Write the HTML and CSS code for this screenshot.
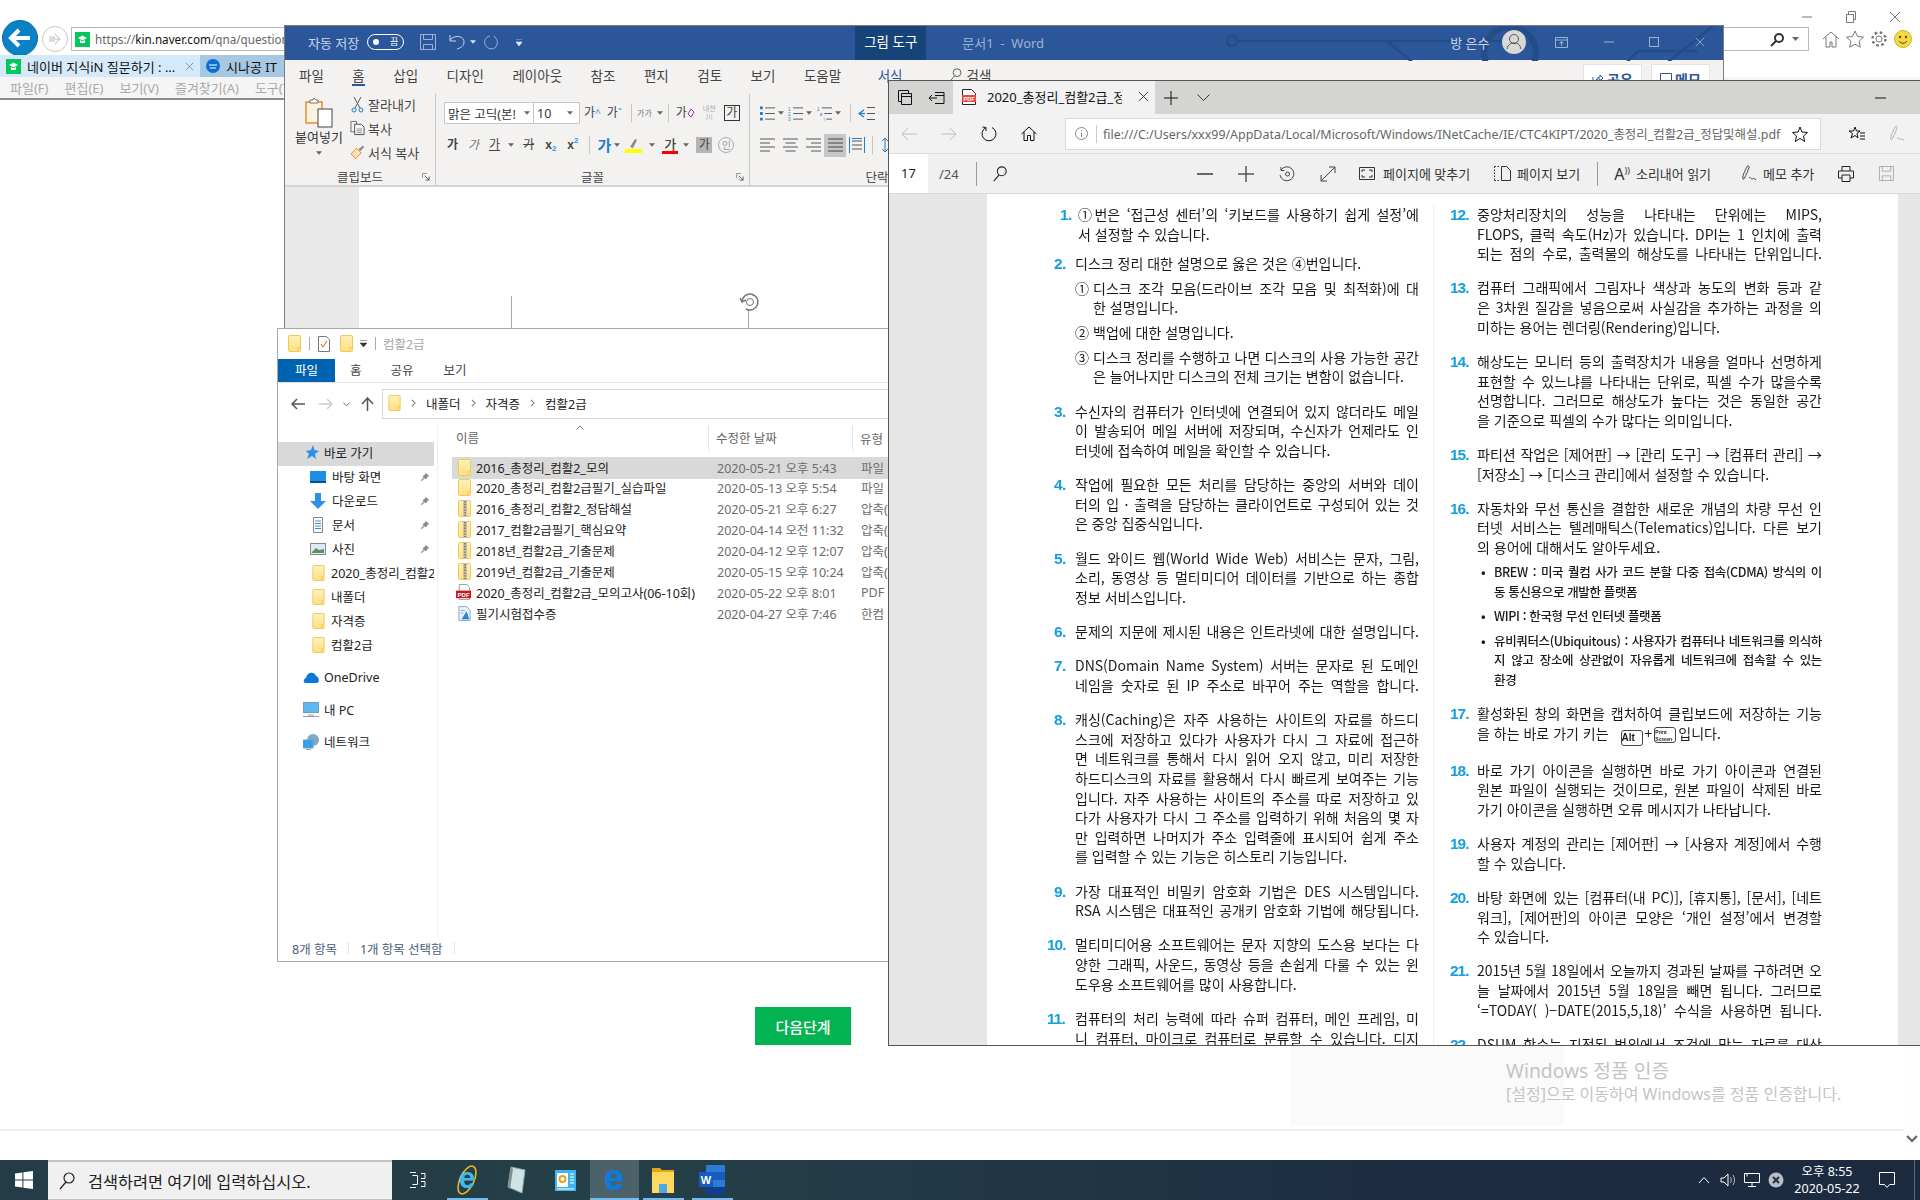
FILE: index.html
```html
<!DOCTYPE html>
<html lang="ko">
<head>
<meta charset="utf-8">
<title>2020_총정리_컴활2급_정답및해설</title>
<link rel="stylesheet" href="styles.css">
</head>
<body>
<svg class="defs" width="0" height="0" aria-hidden="true">
  <defs>
    <linearGradient id="fg" x1="0" y1="0" x2="0" y2="1"><stop offset="0" stop-color="#fff0b8"/><stop offset="1" stop-color="#ffdf85"/></linearGradient>
    <symbol id="folder" viewBox="0 0 13 17"><rect x=".5" y=".5" width="12" height="16" rx="1" fill="url(#fg)" stroke="#eecb55"/><path d="M10 16.5v-4h2.5" fill="none" stroke="#eecb55"/></symbol>
    <symbol id="zip" viewBox="0 0 13 17"><rect x=".5" y=".5" width="12" height="16" rx="1" fill="url(#fg)" stroke="#eecb55"/><rect x="5" y=".5" width="4" height="16" fill="#c9c3a8"/><path d="M7 1v15" stroke="#666" stroke-width="1.4" stroke-dasharray="1.4 1.4"/></symbol>
    <symbol id="pdfdoc" viewBox="0 0 17 18"><path d="M3.5.5h8l3 3v13h-11z" fill="#fff" stroke="#999"/><rect y="7" width="16" height="8" fill="#d0121b"/><text x="8" y="13.5" font-size="6.5" font-weight="700" fill="#fff" text-anchor="middle" font-family="Liberation Sans">PDF</text></symbol>
    <symbol id="hwp" viewBox="0 0 15 17"><path d="M1 .5h9l4 4v12H1z" fill="#e8f2fb" stroke="#7aa0c4"/><path d="M4 15l6-9 3 9z" fill="#2c86d2"/><path d="M3 5h5M3 8h3" stroke="#7aa0c4"/></symbol>
    <symbol id="pin" viewBox="0 0 12 12"><path d="M7 1l4 4-2 1-2 3-1.500-1.500L2 11l-1-1 3.500-3.500L3 5l3-2z" fill="#8a8a8a"/></symbol>
    <symbol id="nvfav" viewBox="0 0 15 15"><rect width="15" height="15" fill="#03c75a"/><path d="M3 6l4.500-2.500L12 6 7.500 8.500z" fill="#fff"/><path d="M5 8v3h5V8L7.500 9.500z" fill="#fff"/></symbol>
    <symbol id="x" viewBox="0 0 12 12"><path d="M1 1l10 10M11 1L1 11" fill="none" stroke="currentColor" stroke-width="1"/></symbol>
    <symbol id="caret" viewBox="0 0 7 4"><path d="M0 0h7L3.500 4z" fill="currentColor"/></symbol>
    <symbol id="bullets" viewBox="0 0 16 15"><path d="M0 0h3v3H0zM0 6h3v3H0zM0 12h3v3H0z" fill="#1f7fc7"/><path d="M5.500 1.500H16M5.500 7.500H16M5.500 13.500H16" stroke="#555"/></symbol>
    <symbol id="numbers" viewBox="0 0 16 15"><text x="0" y="4.500" font-size="5" fill="#1f7fc7" font-family="Liberation Sans">1</text><text x="0" y="10" font-size="5" fill="#1f7fc7" font-family="Liberation Sans">2</text><text x="0" y="15" font-size="5" fill="#1f7fc7" font-family="Liberation Sans">3</text><path d="M5.500 1.500H16M5.500 7.500H16M5.500 13.500H16" stroke="#555"/></symbol>
    <symbol id="multi" viewBox="0 0 16 15"><text x="0" y="4.500" font-size="5" fill="#1f7fc7" font-family="Liberation Sans">1</text><text x="3" y="10" font-size="5" fill="#1f7fc7" font-family="Liberation Sans">a</text><text x="7" y="15" font-size="5" fill="#1f7fc7" font-family="Liberation Sans">i</text><path d="M5 1.500h11M8 7.500h8M10 13.500h6" stroke="#555"/></symbol>
    <symbol id="indent" viewBox="0 0 17 15"><path d="M6 4L1 7.500 6 11" fill="none" stroke="#1f7fc7" stroke-width="1.300"/><path d="M1 7.500h6" stroke="#1f7fc7" stroke-width="1.300"/><path d="M9 1.500h8M9 7.500h8M9 13.500h8" stroke="#555"/></symbol>
    <symbol id="al" viewBox="0 0 15 14"><path d="M0 1h15M0 5h10M0 9h15M0 13h10" stroke="#555"/></symbol>
    <symbol id="ac" viewBox="0 0 15 14"><path d="M0 1h15M2.500 5h10M0 9h15M2.500 13h10" stroke="#555"/></symbol>
    <symbol id="ar" viewBox="0 0 15 14"><path d="M0 1h15M5 5h10M0 9h15M5 13h10" stroke="#555"/></symbol>
    <symbol id="aj" viewBox="0 0 15 14"><path d="M0 1h15M0 5h15M0 9h15M0 13h15" stroke="#444"/></symbol>
    <symbol id="ad" viewBox="0 0 16 16"><path d="M.500 0v16M15.500 0v16" stroke="#1f7fc7"/><path d="M3 4h10M3 8h10M3 12h10" stroke="#555"/><path d="M3 1.500h10" stroke="#1f7fc7"/></symbol>
    <symbol id="launch" viewBox="0 0 9 9"><path d="M.500 .500h5M.500 .500v5" stroke="#888" fill="none"/><path d="M3 3l5 5M8 4v4H4" stroke="#555" fill="none"/></symbol>
    <symbol id="searchglass" viewBox="0 0 16 18"><circle cx="10" cy="6" r="5" fill="none" stroke="currentColor" stroke-width="1.200"/><path d="M7 10L1 17" stroke="currentColor" stroke-width="1.200"/></symbol>
    <symbol id="chev" viewBox="0 0 6 10"><path d="M1 1l4 4-4 4" fill="none" stroke="#777" stroke-width="1.300"/></symbol>
    <symbol id="penc" viewBox="0 0 18 18"><path d="M7 1c-2 4-5 9-5 13 0 2 1 2 2 0 2-4 4-8 5-12 0-2-1-2-2-1zM9 14c2-2 2 2 4 1 1-1 2 0 4 1" fill="none" stroke="currentColor" stroke-width="1"/></symbol>
    <symbol id="floppy" viewBox="0 0 16 16"><path d="M.500 .500h15v15H.500zM3.500 .500v5h9v-5M3.500 15.500v-5h9v5" fill="none" stroke="currentColor"/></symbol>
    <symbol id="deskf" viewBox="0 0 16 12"><rect width="16" height="12" fill="#1b8fe8"/><rect x="0" y="10" width="16" height="2" fill="#0b4c91"/></symbol>
  </defs>
</svg>

<div class="desktop">
  <!-- background browser (Internet Explorer) -->
  <div class="ie-top">
    <svg class="ie-ctl-i" viewBox="0 0 12 12"><path d="M1 6h10" stroke="#777"/></svg>
    <svg class="ie-ctl-i" viewBox="0 0 12 12"><path d="M1.500 3.500h7v8h-7zM3.500 3.500v-3h7v8h-2" fill="none" stroke="#777"/></svg>
    <svg class="ie-ctl-i" viewBox="0 0 12 12"><use href="#x"/></svg>
  </div>
  <div class="ie-nav">
    <div class="ie-back"><svg width="24" height="24" viewBox="0 0 24 24"><path d="M11 4L3 12l8 8M3 12h19" fill="none" stroke="#fff" stroke-width="4"/></svg></div>
    <div class="ie-fwd"><svg width="16" height="16" viewBox="0 0 16 16"><path d="M8 3l5 5-5 5M13 8H2M2 6h6M2 10h6" fill="none" stroke="#bbb"/></svg></div>
    <div class="ie-addr">
      <svg class="fav" width="15" height="15"><use href="#nvfav"/></svg>
      <span class="ie-url">https://<b>kin.naver.com</b>/qna/question</span>
      <span class="ie-addr-right">
        <svg width="15" height="15" viewBox="0 0 15 15"><circle cx="9" cy="6" r="4" fill="none" stroke="#333" stroke-width="2"/><path d="M6 9l-5 5" stroke="#333" stroke-width="2"/></svg>
        <svg width="7" height="4" class="grey"><use href="#caret"/></svg>
      </span>
    </div>
    <div class="ie-tools">
      <svg width="18" height="18" viewBox="0 0 18 18"><path d="M1 9l8-7 8 7M4 7v10h4v-5h2v5h4V7" fill="none" stroke="#777"/></svg>
      <svg width="18" height="18" viewBox="0 0 18 18"><path d="M9 1l2.500 5.500 6 .7-4.400 4 1.200 6L9 14.200 3.700 17.200l1.200-6-4.400-4 6-.7z" fill="none" stroke="#777"/></svg>
      <svg width="18" height="18" viewBox="0 0 18 18"><circle cx="9" cy="9" r="3" fill="none" stroke="#777"/><circle cx="9" cy="9" r="6.500" fill="none" stroke="#777" stroke-width="2.400" stroke-dasharray="2.500 2.600"/></svg>
      <svg width="18" height="18" viewBox="0 0 18 18"><circle cx="9" cy="9" r="8.500" fill="#f5d93e" stroke="#d1b32b"/><circle cx="6" cy="7" r="1.200" fill="#444"/><circle cx="12" cy="7" r="1.200" fill="#444"/><path d="M5 11c2 3 6 3 8 0" fill="none" stroke="#444"/></svg>
    </div>
  </div>
  <div class="ie-tabs">
    <div class="ie-tab ie-tab-on"><svg width="15" height="15"><use href="#nvfav"/></svg><span class="ie-tab-t">네이버 지식iN 질문하기 : ...</span><svg class="ie-tab-x" width="9" height="9"><use href="#x"/></svg></div>
    <div class="ie-tab ie-tab-off"><svg width="14" height="14" viewBox="0 0 14 14"><circle cx="7" cy="7" r="7" fill="#0b6ed1"/><path d="M3 6h8M4 9h6" stroke="#fff"/></svg><span class="ie-tab-t">시나공 IT</span></div>
  </div>
  <div class="ie-menu"><span>파일(F)</span><span>편집(E)</span><span>보기(V)</span><span>즐겨찾기(A)</span><span>도구(T)</span></div>
  <div class="ie-body">
    <div class="ie-page">
      <main class="ie-main"><button class="next-btn" type="button">다음단계</button></main>
      <div class="ie-rule"></div>
    </div>
    <div class="ie-scroll"><svg width="12" height="8" viewBox="0 0 12 8"><path d="M1 1l5 5 5-5" fill="none" stroke="#606060" stroke-width="2"/></svg></div>
  </div>
  <div class="taskbar">
    <div class="tb-start"><svg width="18" height="18" viewBox="0 0 18 18"><path d="M0 2.500l7.400-1v7H0zM8.400 1.300L18 0v8.500H8.400zM0 9.500h7.400v7l-7.400-1zM8.400 9.500H18V18l-9.600-1.300z" fill="#fff"/></svg></div>
    <div class="tb-search"><svg width="16" height="18" class="ink"><use href="#searchglass"/></svg><span>검색하려면 여기에 입력하십시오.</span></div>
    <div class="tb-cell tb-view"><svg width="17" height="16" viewBox="0 0 17 16"><path d="M1 .5h6M1 15.500h6M3.500 3.500h5v9h-5M12 1.500h4v5h-4M12 9.500h4v5h-4" fill="none" stroke="#fff"/></svg></div>
    <div class="tb-cell tb-run"><svg width="26" height="30" viewBox="0 0 26 30"><ellipse cx="13" cy="15" rx="7" ry="15" transform="rotate(25 13 15)" fill="none" stroke="#e8b81e" stroke-width="1.600"/><text x="13" y="23" font-size="30" font-weight="700" fill="#3db9ee" text-anchor="middle" font-family="Liberation Sans">e</text></svg></div>
    <div class="tb-cell"><svg width="22" height="28" viewBox="0 0 22 28"><path d="M6 1l14 3-3 23-14-6z" fill="#cfe3e5" stroke="#8aa"/><path d="M6 1L3 21l2 2 3-20z" fill="#7d8d90"/></svg></div>
    <div class="tb-cell"><svg width="21" height="21" viewBox="0 0 21 21"><rect width="21" height="21" fill="#3fb4ee"/><rect x="2" y="3" width="11" height="14" fill="#fff"/><circle cx="7.500" cy="9" r="3" fill="none" stroke="#e5a21d" stroke-width="2"/><path d="M15 4h4M15 7h4M15 10h4M15 13h4" stroke="#fff"/><path d="M2 19h17" stroke="#fff"/></svg></div>
    <div class="tb-cell tb-active tb-run"><svg width="22" height="28" viewBox="0 0 22 28"><text x="11" y="24" font-size="36" font-weight="700" fill="#0a7ce0" text-anchor="middle" font-family="Liberation Sans">e</text></svg></div>
    <div class="tb-cell tb-run"><svg width="22" height="28" viewBox="0 0 22 28"><path d="M0 2h8l2 2h12v6H0z" fill="#e8a416"/><rect y="6" width="22" height="21" fill="#ffd95e"/><rect x="7" y="18" width="8" height="9" fill="#4da8e6"/></svg></div>
    <div class="tb-cell tb-run"><svg width="26" height="30" viewBox="0 0 26 30"><path d="M7 0h19v30H7z" fill="#2b7cd3"/><path d="M7 7h19v8H7z" fill="#185abd"/><path d="M7 22h19v8H7z" fill="#103f91"/><rect y="7" width="14" height="15" fill="#185abd"/><text x="7" y="19" font-size="11" font-weight="700" fill="#fff" text-anchor="middle" font-family="Liberation Sans">W</text></svg></div>
    <div class="tb-tray">
      <span class="tray-i"><svg width="12" height="8" viewBox="0 0 12 8"><path d="M1 7l5-5.500L11 7" fill="none" stroke="#fff"/></svg></span>
      <span class="tray-i"><svg width="16" height="16" viewBox="0 0 16 16"><path d="M1 6h3l4-4v12l-4-4H1z" fill="none" stroke="#fff"/><path d="M10.500 5c1 2 1 4 0 6M13 3c2 3 2 7 0 10" fill="none" stroke="#bbb"/></svg></span>
      <span class="tray-i"><svg width="16" height="16" viewBox="0 0 16 16"><path d="M.5 1.500h15v9H.5zM3 1.500v3M8 10.500v4M4 14.500h8" fill="none" stroke="#fff"/></svg></span>
      <span class="tray-i"><svg width="16" height="16" viewBox="0 0 16 16"><circle cx="8" cy="8" r="7.500" fill="#b8bfc4"/><path d="M5 5l6 6M11 5l-6 6" stroke="#243040" stroke-width="2"/></svg></span>
      <div class="tb-clock"><span>오후 8:55</span><span>2020-05-22</span></div>
      <span class="tb-note"><svg width="16" height="16" viewBox="0 0 16 16"><path d="M.5 .5h15v12h-5l-2.500 3-2.500-3H.5z" fill="none" stroke="#fff"/></svg></span>
      <span class="tb-desk"></span>
    </div>
  </div>

  <!-- Word window -->
  <section class="win word">
    <header class="w-title">
      <svg class="w-circuit" viewBox="0 0 500 35" width="500" height="35"><g fill="none" stroke="#244c86" stroke-width="2.500"><circle cx="9" cy="15" r="5"/><path d="M14 15h150l30 25M160 15h120"/><circle cx="287" cy="27" r="26" stroke-width="6"/><path d="M400 40l15-15h60M440 40l50-40"/></g></svg>
      <span class="w-auto">자동 저장</span>
      <span class="w-toggle"><i></i><em>끔</em></span>
      <svg class="w-save blue-ic" width="16" height="16"><use href="#floppy"/></svg>
      <svg class="w-undo" width="17" height="16" viewBox="0 0 17 16"><path d="M1 1v6h6M1 6c5-6 15-4 14 3-1 4-4 5-7 6" fill="none" stroke="#c9d5e8"/></svg>
      <svg class="w-ucaret" width="6" height="4"><use href="#caret"/></svg>
      <svg class="w-redo" width="16" height="16" viewBox="0 0 16 16"><path d="M7 2C2 3 0 8 3 12c3 4 9 4 11-1 1-3 0-6-3-9" fill="none" stroke="#9db3d3"/></svg>
      <svg class="w-cust" width="6" height="7" viewBox="0 0 6 7"><path d="M0 0h6M0 3h6L3 7z" fill="#e7edf6" stroke="#e7edf6" stroke-width=".6"/></svg>
      <span class="w-tool">그림 도구</span>
      <span class="w-doc">문서1&nbsp; -&nbsp; Word</span>
      <span class="w-user">방 은수</span>
      <span class="w-avatar"><svg width="24" height="24" viewBox="0 0 24 24"><circle cx="12" cy="12" r="12" fill="#d8d8d8"/><circle cx="12" cy="9" r="4.500" fill="none" stroke="#555"/><path d="M5 19c1-5 4-6 7-6s6 1 7 6" fill="none" stroke="#555"/></svg></span>
      <span class="w-ctl">
        <svg width="13" height="11" viewBox="0 0 13 11"><path d="M.5 .5h12v10H.5zM.5 3h12M6.500 9V5M4.500 6.500l2-2 2 2" fill="none" stroke="#9db3d3"/></svg>
        <svg width="10" height="10" viewBox="0 0 10 10"><path d="M0 5h10" stroke="#9db3d3"/></svg>
        <svg width="10" height="10" viewBox="0 0 10 10"><rect x=".5" y=".5" width="9" height="9" fill="none" stroke="#9db3d3"/></svg>
        <svg width="10" height="10" viewBox="0 0 12 12" class="blue-ic"><use href="#x"/></svg>
      </span>
    </header>
    <nav class="w-tabs">
      <span>파일</span><span class="on">홈</span><span>삽입</span><span>디자인</span><span>레이아웃</span><span>참조</span><span>편지</span><span>검토</span><span>보기</span><span>도움말</span>
      <span class="fmt">서식</span>
      <svg class="w-find" width="13" height="14"><use href="#searchglass"/></svg><span class="find">검색</span>
      <span class="w-btns"><span class="w-btn"><svg width="12" height="12" viewBox="0 0 12 12"><path d="M1 4v7h8V8M4 7c1-2 3-3 4-3V2l3 3-3 3V6c-2 0-3 0-4 1z" fill="none" stroke="#2b579a"/></svg>공유</span><span class="w-btn"><svg width="12" height="12" viewBox="0 0 12 12"><path d="M.5 .5h11v8H5l-2 3v-3H.5z" fill="none" stroke="#2b579a"/></svg>메모</span></span>
    </nav>
    <div class="w-ribbon">
      <div class="rg rg-clip">
        <div class="rg-main">
          <div class="paste">
            <svg width="28" height="31" viewBox="0 0 28 31"><path d="M1 5h16v21H1z" fill="#fbf3e0" stroke="#e0912c" stroke-width="1.500"/><path d="M5 5V3h3l1-2 2 2h2v3H5z" fill="#fff" stroke="#777"/><rect x="13" y="12" width="14" height="18" fill="#fff" stroke="#444"/></svg>
            <span>붙여넣기</span>
            <svg class="grey" width="6" height="4"><use href="#caret"/></svg>
          </div>
          <div class="clip-list">
            <div><svg width="13" height="17" viewBox="0 0 13 17"><path d="M3 1l6 11M10 1L4 12" stroke="#555" fill="none"/><circle cx="3" cy="14" r="2" fill="none" stroke="#1f7fc7"/><circle cx="10" cy="14" r="2" fill="none" stroke="#1f7fc7"/></svg>잘라내기</div>
            <div><svg width="16" height="16" viewBox="0 0 16 16"><path d="M1 1h6v11H1z" fill="none" stroke="#666"/><path d="M5 4h7l3 3v8H5z" fill="#fff" stroke="#444"/><path d="M7 9h6M7 11h6M7 13h6" stroke="#888"/></svg>복사</div>
            <div><svg width="16" height="16" viewBox="0 0 16 16"><path d="M1 10l6-6 5 5-6 6z" fill="#fbe3b5" stroke="#e0812c"/><path d="M9 5l5-4 1 2-4 4" fill="#888"/></svg>서식 복사</div>
          </div>
        </div>
        <div class="rg-label">클립보드<svg class="launch" width="8" height="8"><use href="#launch"/></svg></div>
      </div>
      <div class="rg rg-font">
        <div class="rg-main col">
          <div class="frow">
            <span class="fbox fname">맑은 고딕(본!<svg class="grey" width="6" height="4"><use href="#caret"/></svg></span>
            <span class="fbox fsize">10<svg class="grey" width="6" height="4"><use href="#caret"/></svg></span>
            <span class="gg ml4">가<sup class="sb">^</sup></span><span class="gg ml6">가<sup class="sb">ˇ</sup></span>
            <span class="vsep ml9"></span>
            <span class="gg small ml5">가가</span><svg class="grey ml5" width="6" height="4"><use href="#caret"/></svg>
            <span class="vsep ml5"></span>
            <span class="gg ml7">가<svg width="8" height="10" viewBox="0 0 8 10"><path d="M4 1l3 3-3 5-3-3z" fill="none" stroke="#a32cb5"/></svg></span>
            <span class="gruby ml7">내천<br>川</span>
            <span class="gg boxed ml7">가</span>
          </div>
          <div class="frow r2">
            <span class="gg b ml11">가</span><span class="gg i ml10">가</span><span class="gg u ml10">가</span><svg class="grey ml8" width="6" height="4"><use href="#caret"/></svg>
            <span class="gg s ml9">가</span><span class="gg sm ml11">x<sub>2</sub></span><span class="gg sm ml11">x<sup>2</sup></span>
            <span class="vsep ml11"></span>
            <span class="gg texteff ml7">가</span><svg class="grey ml3" width="6" height="4"><use href="#caret"/></svg>
            <svg class="ml5" width="17" height="16" viewBox="0 0 17 16"><path d="M5 10l5-8 2 1-4 8z" fill="#888"/><rect y="12" width="17" height="4" fill="#ff0"/></svg>
            <svg class="grey ml7" width="6" height="4"><use href="#caret"/></svg>
            <span class="gg red ml7">가</span><svg class="grey ml5" width="6" height="4"><use href="#caret"/></svg>
            <span class="gg shade ml7">가</span>
            <span class="gg circled ml6">인</span>
          </div>
        </div>
        <div class="rg-label">글꼴<svg class="launch" width="8" height="8"><use href="#launch"/></svg></div>
      </div>
      <div class="rg rg-para">
        <div class="rg-main col">
          <div class="frow prow">
            <svg width="15" height="15"><use href="#bullets"/></svg><svg class="grey ml3" width="6" height="4"><use href="#caret"/></svg>
            <svg class="ml4" width="15" height="15"><use href="#numbers"/></svg><svg class="grey ml3" width="6" height="4"><use href="#caret"/></svg>
            <svg class="ml5" width="15" height="15"><use href="#multi"/></svg><svg class="grey ml3" width="6" height="4"><use href="#caret"/></svg>
            <span class="vsep ml9"></span>
            <svg class="ml7" width="17" height="15"><use href="#indent"/></svg>
          </div>
          <div class="frow r2 prow">
            <svg width="15" height="14"><use href="#al"/></svg>
            <svg class="ml8" width="15" height="14"><use href="#ac"/></svg>
            <svg class="ml8" width="15" height="14"><use href="#ar"/></svg>
            <span class="a-on"><svg width="15" height="14"><use href="#aj"/></svg></span>
            <svg class="ml3" width="16" height="16"><use href="#ad"/></svg>
            <span class="vsep ml7"></span>
            <svg class="ml8" width="8" height="16" viewBox="0 0 8 16"><path d="M4 1v14M1 4l3-3 3 3M1 12l3 3 3-3" fill="none" stroke="#1f7fc7"/></svg>
          </div>
        </div>
        <div class="rg-label lab-para">단락</div>
      </div>
    </div>
    <div class="w-doc-area">
      <div class="w-gutter"></div>
      <div class="w-sheet">
        <span class="handle-l"></span>
        <span class="handle-r"></span>
        <svg class="rot" width="26" height="26" viewBox="0 0 26 26"><path d="M5 13a8 8 0 1 1 4 7M3 9l2 4 4-2" fill="none" stroke="#777" stroke-width="1.500"/><circle cx="13" cy="13" r="3.500" fill="none" stroke="#777"/></svg>
      </div>
    </div>
  </section>

  <!-- File Explorer -->
  <section class="win explorer">
    <div class="ex-qat">
      <svg width="13" height="17"><use href="#folder"/></svg><span class="q-sep"></span>
      <svg class="ml8" width="12" height="16" viewBox="0 0 12 16"><path d="M.5 .5h8l3 3v12H.5z" fill="#fff" stroke="#777"/><path d="M3 8l2 3 4-6" fill="none" stroke="#e2562d"/></svg>
      <svg class="ml10" width="13" height="17"><use href="#folder"/></svg>
      <svg class="ml7" width="7" height="7" viewBox="0 0 7 7"><path d="M0 .5h7M0 3h7L3.500 7z" fill="#333" stroke="#333" stroke-width=".5"/></svg>
      <span class="q-sep ml5"></span>
      <span class="ex-title">컴활2급</span>
    </div>
    <nav class="ex-tabs"><span class="ex-file">파일</span><span class="ex-t1">홈</span><span class="ex-t2">공유</span><span class="ex-t3">보기</span></nav>
    <div class="ex-nav">
      <svg width="14" height="12" viewBox="0 0 14 12"><path d="M6 1L1 6l5 5M1 6h13" fill="none" stroke="#555" stroke-width="1.500"/></svg>
      <svg class="ml14" width="14" height="12" viewBox="0 0 14 12"><path d="M8 1l5 5-5 5M13 6H0" fill="none" stroke="#ccc" stroke-width="1.500"/></svg>
      <svg class="ml10" width="7" height="5" viewBox="0 0 7 5"><path d="M.5 .5L3.500 4 6.500 .5" fill="none" stroke="#777"/></svg>
      <svg class="ml11" width="13" height="14" viewBox="0 0 13 14"><path d="M1 7l5.500-6L12 7M6.500 1v13" fill="none" stroke="#555" stroke-width="1.500"/></svg>
      <div class="ex-addr">
        <svg width="13" height="16"><use href="#folder"/></svg>
        <svg class="crumb-ch" width="5" height="8"><use href="#chev"/></svg><span>내폴더</span>
        <svg class="crumb-ch" width="5" height="8"><use href="#chev"/></svg><span>자격증</span>
        <svg class="crumb-ch" width="5" height="8"><use href="#chev"/></svg><span>컴활2급</span>
      </div>
    </div>
    <div class="ex-body">
      <aside class="ex-side">
        <div class="sd sd-root sd-on"><svg width="14" height="15" viewBox="0 0 14 15"><path d="M8 0l1.500 5L14 6l-4 3 1 5-4-3-5 3 2-5-3-3 5-1z" fill="#2f8fe8"/></svg>바로 가기</div>
        <div class="sd"><svg width="16" height="12"><use href="#deskf"/></svg><span class="sd-t">바탕 화면</span><svg class="sd-pin" width="10" height="10"><use href="#pin"/></svg></div>
        <div class="sd"><svg width="16" height="16" viewBox="0 0 16 16"><path d="M5 0h6v8h5l-8 8-8-8h5z" fill="#2f8fe8"/></svg><span class="sd-t">다운로드</span><svg class="sd-pin" width="10" height="10"><use href="#pin"/></svg></div>
        <div class="sd"><svg width="16" height="16" viewBox="0 0 16 16"><path d="M3.500 .5h9v15h-9z" fill="#fff" stroke="#888"/><path d="M5 4h6M5 6.500h6M5 9h6M5 11.500h6" stroke="#3b8ed0"/></svg><span class="sd-t">문서</span><svg class="sd-pin" width="10" height="10"><use href="#pin"/></svg></div>
        <div class="sd"><svg width="16" height="12" viewBox="0 0 16 12"><rect x=".5" y=".5" width="15" height="11" fill="#dcebf5" stroke="#888"/><path d="M2 9l4-4 3 2 5-1v4H2z" fill="#5c8f6a"/></svg><span class="sd-t">사진</span><svg class="sd-pin" width="10" height="10"><use href="#pin"/></svg></div>
        <div class="sd sd-f"><svg width="13" height="16"><use href="#folder"/></svg><span class="sd-t clip">2020_총정리_컴활2급</span></div>
        <div class="sd sd-f"><svg width="13" height="16"><use href="#folder"/></svg><span class="sd-t">내폴더</span></div>
        <div class="sd sd-f"><svg width="13" height="16"><use href="#folder"/></svg><span class="sd-t">자격증</span></div>
        <div class="sd sd-f"><svg width="13" height="16"><use href="#folder"/></svg><span class="sd-t">컴활2급</span></div>
        <div class="sd sd-root sd-od"><svg width="16" height="11" viewBox="0 0 16 11"><path d="M3 11C0 11 0 7 3 6c1-6 8-7 10-2 3 0 4 7 1 7z" fill="#0a78d6"/></svg>OneDrive</div>
        <div class="sd sd-root sd-pc"><svg width="16" height="15" viewBox="0 0 16 15"><rect x=".5" y=".5" width="15" height="10" fill="#5ab9f5" stroke="#7a9bb5"/><path d="M5 13h6M0 14.500h16" stroke="#99a"/></svg>내 PC</div>
        <div class="sd sd-root sd-nw"><svg width="16" height="16" viewBox="0 0 16 16"><circle cx="10" cy="6" r="6" fill="#7fa9c9"/><rect y="6" width="10" height="8" fill="#2da2ee" stroke="#7a9bb5"/><path d="M3 15.500h5" stroke="#99a"/></svg>네트워크</div>
      </aside>
      <div class="ex-list">
        <div class="ex-head"><span class="hc hc-n">이름<svg class="sort" width="8" height="5" viewBox="0 0 8 5"><path d="M.5 4.500L4 1l3.500 3.500" fill="none" stroke="#777"/></svg></span><span class="hc hc-d">수정한 날짜</span><span class="hc-t">유형</span></div>
        <div class="fr fr-on"><svg width="13" height="17"><use href="#folder"/></svg><span class="fn">2016_총정리_컴활2_모의</span><span class="fd">2020-05-21 오후 5:43</span><span class="ft">파일</span></div>
        <div class="fr"><svg width="13" height="17"><use href="#folder"/></svg><span class="fn">2020_총정리_컴활2급필기_실습파일</span><span class="fd">2020-05-13 오후 5:54</span><span class="ft">파일</span></div>
        <div class="fr"><svg width="13" height="17"><use href="#zip"/></svg><span class="fn">2016_총정리_컴활2_정답해설</span><span class="fd">2020-05-21 오후 6:27</span><span class="ft">압축(</span></div>
        <div class="fr"><svg width="13" height="17"><use href="#zip"/></svg><span class="fn">2017_컴활2급필기_핵심요약</span><span class="fd">2020-04-14 오전 11:32</span><span class="ft">압축(</span></div>
        <div class="fr"><svg width="13" height="17"><use href="#zip"/></svg><span class="fn">2018년_컴활2급_기출문제</span><span class="fd">2020-04-12 오후 12:07</span><span class="ft">압축(</span></div>
        <div class="fr"><svg width="13" height="17"><use href="#zip"/></svg><span class="fn">2019년_컴활2급_기출문제</span><span class="fd">2020-05-15 오후 10:24</span><span class="ft">압축(</span></div>
        <div class="fr"><svg class="pdfic" width="16" height="17"><use href="#pdfdoc"/></svg><span class="fn">2020_총정리_컴활2급_모의고사(06-10회)</span><span class="fd">2020-05-22 오후 8:01</span><span class="ft">PDF</span></div>
        <div class="fr"><svg width="14" height="17"><use href="#hwp"/></svg><span class="fn">필기시험접수증</span><span class="fd">2020-04-27 오후 7:46</span><span class="ft">한컴</span></div>
      </div>
    </div>
    <footer class="ex-status"><span>8개 항목</span><span class="st-sep"></span><span>1개 항목 선택함</span><span class="st-sep"></span></footer>
  </section>

  <!-- Edge window -->
  <section class="win edge">
    <div class="e-tabs">
      <svg class="e-t1" width="14" height="15" viewBox="0 0 14 15"><path d="M3.500 3.500h10v11h-10z" fill="#d4d4d2" stroke="#111"/><path d="M.5 .5h10v3M.5 .5v11h3M3.500 6.500h10" fill="none" stroke="#111"/></svg>
      <svg class="e-t2" width="16" height="12" viewBox="0 0 16 12"><path d="M6 .5h9v11H6M6 3.500h9M0 6h8M3 3L0 6l3 3" fill="none" stroke="#111"/></svg>
      <div class="e-tab">
        <svg width="14" height="16" viewBox="0 0 14 16"><path d="M.5 .5h9l4 4v11H.5z" fill="#fff" stroke="#222"/><rect x="0" y="6" width="14" height="7" fill="#f0453a"/><text x="7" y="11.500" font-size="5.500" font-weight="700" fill="#fff" text-anchor="middle" font-family="Liberation Sans">PDF</text></svg>
        <span class="e-tab-t">2020_총정리_컴활2급_정답및해설.pdf</span>
        <svg class="e-tab-x" width="11" height="11"><use href="#x"/></svg>
      </div>
      <svg class="e-plus" width="14" height="14" viewBox="0 0 14 14"><path d="M7 0v14M0 7h14" stroke="#111"/></svg>
      <svg class="e-more" width="13" height="7" viewBox="0 0 13 7"><path d="M.5 .5l6 6 6-6" fill="none" stroke="#333"/></svg>
      <svg class="e-min" width="11" height="2"><path d="M0 1h11" stroke="#111"/></svg>
    </div>
    <div class="e-nav">
      <svg width="16" height="14" viewBox="0 0 16 14" class="e-back"><path d="M7 1L1 7l6 6M1 7h15" fill="none" stroke="#bdbdbd"/></svg>
      <svg width="16" height="14" viewBox="0 0 16 14" class="e-fwd"><path d="M9 1l6 6-6 6M15 7H0" fill="none" stroke="#bdbdbd"/></svg>
      <svg width="16" height="16" viewBox="0 0 16 16" class="e-ref"><path d="M5 1.500a7 7 0 1 0 6 0M5 1.500V5M5 1.500L1.500 1" fill="none" stroke="#111"/></svg>
      <svg width="16" height="15" viewBox="0 0 16 15" class="e-home"><path d="M.5 8L8 1l7.500 7M3 6v8.500h3.500v-5h3v5H13V6" fill="none" stroke="#111"/></svg>
      <div class="e-addr">
        <svg width="13" height="13" viewBox="0 0 13 13"><circle cx="6.500" cy="6.500" r="6" fill="none" stroke="#888"/><path d="M6.500 5.500v4.500M6.500 3v1.200" stroke="#888"/></svg>
        <span class="e-addr-sep"></span>
        <span class="e-url">file:///C:/Users/xxx99/AppData/Local/Microsoft/Windows/INetCache/IE/CTC4KIPT/2020_총정리_컴활2급_정답및해설.pdf</span>
        <svg class="e-star" width="16" height="16" viewBox="0 0 16 16"><path d="M8 1l2 5 5.500.5-4 3.500 1.200 5.500L8 12.500 3.300 15.500l1.200-5.500-4-3.500L6 6z" fill="none" stroke="#111"/></svg>
      </div>
      <svg width="16" height="15" viewBox="0 0 16 15" class="e-hub"><path d="M6 1L7.500 5 11 5 8 7.500 9 12 6 9.500 2 12 3.500 7.500 0 5l4.500 0z" fill="none" stroke="#111"/><path d="M11 7h5M11 10h5M11 13h5" stroke="#111"/></svg>
      <svg width="16" height="18" class="e-pen"><use href="#penc"/></svg>
    </div>
    <div class="e-pdfbar">
      <span class="e-page">17</span>
      <span class="e-total">/24</span>
      <span class="e-sep"></span>
      <svg class="e-find ink" width="16" height="16" viewBox="0 0 16 18"><use href="#searchglass"/></svg>
      <svg class="e-minus" width="16" height="2"><path d="M0 1h16" stroke="#666" stroke-width="2"/></svg>
      <svg class="e-zoomin" width="16" height="16" viewBox="0 0 16 16"><path d="M8 0v16M0 8h16" stroke="#555" stroke-width="1.500"/></svg>
      <svg class="e-rot" width="16" height="16" viewBox="0 0 16 16"><path d="M2 4a7 7 0 1 1-1 5M2 1v3.500h3.500" fill="none" stroke="#444"/><circle cx="8.500" cy="8" r="2" fill="none" stroke="#444"/></svg>
      <svg class="e-full" width="16" height="16" viewBox="0 0 16 16"><path d="M1 15L15 1M9 1h6v6M1 9v6h6" fill="none" stroke="#444"/></svg>
      <span class="e-act e-a1"><svg width="16" height="13" viewBox="0 0 16 13"><path d="M.5 .5h15v12H.5z" fill="none" stroke="#333"/><path d="M3 5V3h3M13 5V3h-3M3 8v2h3M13 8v2h-3" fill="none" stroke="#333"/></svg>페이지에 맞추기</span>
      <span class="e-act e-a2"><svg width="17" height="15" viewBox="0 0 17 15"><path d="M.5 .5h5M.5 14.500h5M.5 .5v14" fill="none" stroke="#333" stroke-dasharray="1.500 1.500"/><path d="M7.500 .5h5l4 4v10h-9z" fill="none" stroke="#333"/></svg>페이지 보기</span>
      <span class="e-sep e-sep2"></span>
      <span class="e-act e-a3"><span class="e-reada">A<sup>))</sup></span>소리내어 읽기</span>
      <span class="e-act e-a4"><svg width="16" height="17"><use href="#penc"/></svg>메모 추가</span>
      <svg class="e-print" width="16" height="16" viewBox="0 0 16 16"><path d="M4 5V.5h8V5M.5 5h15v7H12M4 12H.5V5M4 9h8v6.500H4z" fill="none" stroke="#222"/></svg>
      <svg class="e-psave" width="15" height="15"><use href="#floppy"/></svg>
    </div>
    <div class="pdf-view">
      <div class="pdf-page">
        <div class="pdf-col pdf-left">
          <div class="p p-first"><b class="n">1.</b><div class="t"><div class="l">①번은 ‘접근성 센터’의 ‘키보드를 사용하기 쉽게 설정’에</div><div class="l e">서 설정할 수 있습니다.</div></div></div>
          <div class="p p-tight"><b class="n">2.</b><div class="t"><div class="l e">디스크 정리 대한 설명으로 옳은 것은 ④번입니다.</div>
            <div class="sub"><span class="m">①</span><div class="t"><div class="l">디스크 조각 모음(드라이브 조각 모음 및 최적화)에 대</div><div class="l e">한 설명입니다.</div></div></div>
            <div class="sub"><span class="m">②</span><div class="t"><div class="l e">백업에 대한 설명입니다.</div></div></div>
            <div class="sub"><span class="m">③</span><div class="t"><div class="l">디스크 정리를 수행하고 나면 디스크의 사용 가능한 공간</div><div class="l e">은 늘어나지만 디스크의 전체 크기는 변함이 없습니다.</div></div></div>
          </div></div>
          <div class="p"><b class="n">3.</b><div class="t"><div class="l">수신자의 컴퓨터가 인터넷에 연결되어 있지 않더라도 메일</div><div class="l">이 발송되어 메일 서버에 저장되며, 수신자가 언제라도 인</div><div class="l e">터넷에 접속하여 메일을 확인할 수 있습니다.</div></div></div>
          <div class="p"><b class="n">4.</b><div class="t"><div class="l">작업에 필요한 모든 처리를 담당하는 중앙의 서버와 데이</div><div class="l">터의 입 · 출력을 담당하는 클라이언트로 구성되어 있는 것</div><div class="l e">은 중앙 집중식입니다.</div></div></div>
          <div class="p"><b class="n">5.</b><div class="t"><div class="l">월드 와이드 웹(World Wide Web) 서비스는 문자, 그림,</div><div class="l">소리, 동영상 등 멀티미디어 데이터를 기반으로 하는 종합</div><div class="l e">정보 서비스입니다.</div></div></div>
          <div class="p"><b class="n">6.</b><div class="t"><div class="l">문제의 지문에 제시된 내용은 인트라넷에 대한 설명입니다.</div></div></div>
          <div class="p"><b class="n">7.</b><div class="t"><div class="l">DNS(Domain Name System) 서버는 문자로 된 도메인</div><div class="l">네임을 숫자로 된 IP 주소로 바꾸어 주는 역할을 합니다.</div></div></div>
          <div class="p"><b class="n">8.</b><div class="t"><div class="l">캐싱(Caching)은 자주 사용하는 사이트의 자료를 하드디</div><div class="l">스크에 저장하고 있다가 사용자가 다시 그 자료에 접근하</div><div class="l">면 네트워크를 통해서 다시 읽어 오지 않고, 미리 저장한</div><div class="l">하드디스크의 자료를 활용해서 다시 빠르게 보여주는 기능</div><div class="l">입니다. 자주 사용하는 사이트의 주소를 따로 저장하고 있</div><div class="l">다가 사용자가 다시 그 주소를 입력하기 위해 처음의 몇 자</div><div class="l">만 입력하면 나머지가 주소 입력줄에 표시되어 쉽게 주소</div><div class="l e">를 입력할 수 있는 기능은 히스토리 기능입니다.</div></div></div>
          <div class="p"><b class="n">9.</b><div class="t"><div class="l">가장 대표적인 비밀키 암호화 기법은 DES 시스템입니다.</div><div class="l">RSA 시스템은 대표적인 공개키 암호화 기법에 해당됩니다.</div></div></div>
          <div class="p"><b class="n n2">10.</b><div class="t"><div class="l">멀티미디어용 소프트웨어는 문자 지향의 도스용 보다는 다</div><div class="l">양한 그래픽, 사운드, 동영상 등을 손쉽게 다룰 수 있는 윈</div><div class="l e">도우용 소프트웨어를 많이 사용합니다.</div></div></div>
          <div class="p"><b class="n n2">11.</b><div class="t"><div class="l">컴퓨터의 처리 능력에 따라 슈퍼 컴퓨터, 메인 프레임, 미</div><div class="l">니 컴퓨터, 마이크로 컴퓨터로 분류할 수 있습니다. 디지</div></div></div>
        </div>
        <div class="pdf-col pdf-right">
          <div class="p"><b class="n">12.</b><div class="t"><div class="l">중앙처리장치의 성능을 나타내는 단위에는 MIPS,</div><div class="l">FLOPS, 클럭 속도(Hz)가 있습니다. DPI는 1 인치에 출력</div><div class="l">되는 점의 수로, 출력물의 해상도를 나타내는 단위입니다.</div></div></div>
          <div class="p"><b class="n">13.</b><div class="t"><div class="l">컴퓨터 그래픽에서 그림자나 색상과 농도의 변화 등과 같</div><div class="l">은 3차원 질감을 넣음으로써 사실감을 추가하는 과정을 의</div><div class="l e">미하는 용어는 렌더링(Rendering)입니다.</div></div></div>
          <div class="p"><b class="n">14.</b><div class="t"><div class="l">해상도는 모니터 등의 출력장치가 내용을 얼마나 선명하게</div><div class="l">표현할 수 있느냐를 나타내는 단위로, 픽셀 수가 많을수록</div><div class="l">선명합니다. 그러므로 해상도가 높다는 것은 동일한 공간</div><div class="l e">을 기준으로 픽셀의 수가 많다는 의미입니다.</div></div></div>
          <div class="p"><b class="n">15.</b><div class="t"><div class="l">파티션 작업은 [제어판] → [관리 도구] → [컴퓨터 관리] →</div><div class="l e">[저장소] → [디스크 관리]에서 설정할 수 있습니다.</div></div></div>
          <div class="p"><b class="n">16.</b><div class="t"><div class="l">자동차와 무선 통신을 결합한 새로운 개념의 차량 무선 인</div><div class="l">터넷 서비스는 텔레매틱스(Telematics)입니다. 다른 보기</div><div class="l e">의 용어에 대해서도 알아두세요.</div>
            <div class="bul"><span class="dot">•</span><div class="t"><div class="l"><b>BREW</b> : 미국 퀄컴 사가 코드 분할 다중 접속(CDMA) 방식의 이</div><div class="l e">동 통신용으로 개발한 플랫폼</div></div></div>
            <div class="bul"><span class="dot">•</span><div class="t"><div class="l e"><b>WIPI</b> : 한국형 무선 인터넷 플랫폼</div></div></div>
            <div class="bul"><span class="dot">•</span><div class="t"><div class="l"><b>유비쿼터스(Ubiquitous)</b> : 사용자가 컴퓨터나 네트워크를 의식하</div><div class="l">지 않고 장소에 상관없이 자유롭게 네트워크에 접속할 수 있는</div><div class="l e">환경</div></div></div>
          </div></div>
          <div class="p"><b class="n">17.</b><div class="t"><div class="l">활성화된 창의 화면을 캡처하여 클립보드에 저장하는 기능</div><div class="l e">을 하는 바로 가기 키는 <span class="kbd">Alt</span>+<span class="kbd kbd-s">Print<br>Screen</span>입니다.</div></div></div>
          <div class="p"><b class="n">18.</b><div class="t"><div class="l">바로 가기 아이콘을 실행하면 바로 가기 아이콘과 연결된</div><div class="l">원본 파일이 실행되는 것이므로, 원본 파일이 삭제된 바로</div><div class="l e">가기 아이콘을 실행하면 오류 메시지가 나타납니다.</div></div></div>
          <div class="p"><b class="n">19.</b><div class="t"><div class="l">사용자 계정의 관리는 [제어판] → [사용자 계정]에서 수행</div><div class="l e">할 수 있습니다.</div></div></div>
          <div class="p"><b class="n">20.</b><div class="t"><div class="l">바탕 화면에 있는 [컴퓨터(내 PC)], [휴지통], [문서], [네트</div><div class="l">워크], [제어판]의 아이콘 모양은 ‘개인 설정’에서 변경할</div><div class="l e">수 있습니다.</div></div></div>
          <div class="p"><b class="n">21.</b><div class="t"><div class="l">2015년 5월 18일에서 오늘까지 경과된 날짜를 구하려면 오</div><div class="l">늘 날짜에서 2015년 5월 18일을 빼면 됩니다. 그러므로</div><div class="l">‘=TODAY( )−DATE(2015,5,18)’ 수식을 사용하면 됩니다.</div></div></div>
          <div class="p"><b class="n">22.</b><div class="t"><div class="l">DSUM 함수는 지정된 범위에서 조건에 맞는 자료를 대상</div></div></div>
        </div>
      </div>
    </div>
  </section>

  <!-- watermark overlays -->
  <div class="wm-box"></div>
  <div class="wm"><div class="wm-1">Windows 정품 인증</div><div class="wm-2">[설정]으로 이동하여 Windows를 정품 인증합니다.</div></div>
</div>
</body>
</html>
```
FILE: styles.css
```css
*{box-sizing:border-box;margin:0;padding:0}
html,body{width:1920px;height:1200px;overflow:hidden;background:#fff}
body{font-family:"Noto Sans","Noto Sans CJK KR",sans-serif;font-size:13px;color:#333}
svg{display:block;flex:none}
.defs{position:absolute}
.grey{color:#666}
.ink{color:#222}
.blue-ic{color:#9db3d3}
.ml3{margin-left:3px}.ml4{margin-left:4px}.ml5{margin-left:5px}.ml6{margin-left:6px}.ml7{margin-left:7px}.ml8{margin-left:8px}.ml9{margin-left:9px}.ml10{margin-left:10px}.ml11{margin-left:11px}.ml14{margin-left:14px}

.desktop{position:relative;width:1920px;height:1200px;display:flex;flex-direction:column;overflow:hidden;background:#fff}

/* IE */
.ie-top{height:27px;display:flex;justify-content:flex-end;align-items:flex-start;padding:11px 19px 0 0;gap:32px}
.ie-ctl-i{width:12px;height:12px;color:#777}
.ie-nav{height:24px;display:flex;align-items:center;padding-left:2px}
.ie-back{width:36px;height:36px;margin-top:-2px;border-radius:50%;background:#0a82c6;border:1px solid #0a6aa0;display:flex;align-items:center;justify-content:center;flex:none}
.ie-fwd{width:26px;height:26px;margin-left:4px;border-radius:50%;border:1px solid #c8c8c8;background:#fff;display:flex;align-items:center;justify-content:center;flex:none}
.ie-addr{margin-left:3px;width:1738px;height:24px;border:1px solid #b8b8b8;display:flex;align-items:center;padding-left:3px;flex:none}
.ie-url{margin-left:5px;font-size:11.700px;color:#666;line-height:22px}
.ie-url b{font-weight:400;color:#111}
.ie-addr-right{margin-left:auto;display:flex;align-items:center;gap:7px;padding-right:9px}
.ie-tools{display:flex;gap:6px;margin-left:13px;align-items:center}
.ie-tabs{height:22px;margin-top:4px;display:flex}
.ie-tab{display:flex;align-items:center;height:22px;padding-left:6px;gap:6px;font-size:13px;color:#111}
.ie-tab-on{width:200px;background:#d4e9fa}
.ie-tab-off{width:100px;background:#a7c8e3}
.ie-tab-t{white-space:nowrap}
.ie-tab-x{margin-left:auto;margin-right:6px;color:#777}
.ie-menu{height:23px;display:flex;gap:16px;padding:0 0 0 10px;align-items:center;background:#f5f5f5;border-bottom:2px solid #8c8c8c;font-size:13px;color:#aaa}
.ie-body{flex:1;display:flex;min-height:0}
.ie-page{flex:1;display:flex;flex-direction:column}
.ie-main{height:1029px;padding:907px 0 0 755px}
.next-btn{width:96px;height:38px;background:#03b351;color:#fff;border:0;font:500 15px "Noto Sans CJK KR",sans-serif}
.ie-rule{height:2px;background:#eee}
.ie-scroll{width:17px;display:flex;justify-content:center;align-items:flex-end;padding-bottom:17px;background:#fdfdfd}

/* taskbar */
.taskbar{height:40px;flex:none;display:flex;background:linear-gradient(90deg,#233c47,#253f49 35%,#1c2c42 75%,#1c2a3f);color:#fff}
.tb-start{width:48px;display:flex;align-items:center;justify-content:center}
.tb-search{width:344px;background:#f0f0f0;border-top:2px solid #c2c2c2;border-bottom:1px solid #c2c2c2;display:flex;align-items:center;gap:13px;padding-left:11px;color:#222;font-size:16.300px}
.tb-cell{width:49px;height:40px;position:relative;display:flex;align-items:center;justify-content:center;flex:none}
.tb-view{width:50.500px}
.tb-active{background:#4c626a}
.tb-run::after{content:"";position:absolute;left:4px;right:4px;bottom:0;height:2px;background:#76b9ed}
.tb-active::after{left:0;right:0}
.tb-tray{margin-left:auto;display:flex;align-items:center;height:40px}
.tray-i{width:24px;display:flex;justify-content:center}
.tb-clock{width:76px;margin-left:1px;display:flex;flex-direction:column;align-items:center;font-size:12.500px;line-height:17px}
.tb-note{width:44px;display:flex;justify-content:center}
.tb-desk{width:11px;height:40px;border-left:0;position:relative}
.tb-desk::after{content:"";position:absolute;left:5px;top:0;bottom:0;width:1px;background:#5a6b7a}

/* windows */
.win{position:absolute;background:#fff}
.word{left:284px;top:25px;width:1440px;height:420px;border:1px solid #7c7c7c;display:flex;flex-direction:column;overflow:hidden}
.explorer{left:277px;top:328px;width:612px;height:634px;border:1px solid #a8a8a8;display:flex;flex-direction:column;overflow:hidden}
.edge{left:888px;top:80px;width:1032px;height:966px;border:1px solid #555;border-right:0;display:flex;flex-direction:column;background:#f0f0f0;overflow:hidden}

/* word */
.w-title{height:34px;background:#2b579a;display:flex;align-items:center;position:relative;color:#c9d5e8;flex:none;padding-bottom:2px}
.w-circuit{position:absolute;right:0;top:0}
.w-title>span,.w-title>svg:not(.w-circuit){position:relative}
.w-auto{margin-left:23px;font-size:13px}
.w-toggle{margin-left:8px;width:37px;height:16px;border:1px solid #fff;border-radius:8px;display:flex;align-items:center;justify-content:space-between;padding:0 5px;color:#fff}
.w-toggle i{width:6px;height:6px;border-radius:50%;background:#fff}
.w-toggle em{font-style:normal;font-size:9px;line-height:14px}
.w-save{margin-left:16px}
.w-undo{margin-left:13px}
.w-ucaret{margin-left:4px;color:#dde5f1}
.w-redo{margin-left:7px}
.w-cust{margin-left:17px}
.w-tool{margin-left:333px;width:71px;height:34px;margin-top:2px;background:#174478;color:#fff;font-size:13.500px;line-height:32px;text-align:center;flex:none}
.w-doc{margin-left:36px;font-size:13px;color:#9db3d3;width:130px;white-space:nowrap}
.w-user{margin-left:358px;font-size:13px;white-space:nowrap}
.w-avatar{margin-left:12px}
.w-ctl{margin-left:auto;display:flex;align-items:center;width:168px;justify-content:space-between;padding:0 18px 0 0}
.w-tabs{height:33px;background:#f3f2f1;display:flex;align-items:center;padding:0 0 3px 14px;gap:28.500px;font-size:13.500px;color:#444;flex:none}
.w-tabs span{position:relative;white-space:nowrap}
.w-tabs .on::after{content:"";position:absolute;left:0;right:0;bottom:-1px;height:2px;background:#2b579a}
.w-tabs .fmt{color:#2b579a;margin-left:8px}
.w-find{margin-left:18px;color:#555}
.w-tabs .find{margin-left:-24px}
.w-btns{margin-left:auto;display:flex;gap:9px;padding-right:13px;align-self:flex-start;padding-top:4px}
.w-btn{width:59px;height:30px;background:#fff;border:1px solid #e4e4e4;color:#2b579a;font-weight:700;font-size:14px;display:flex;align-items:center;justify-content:center;gap:3px}
.w-ribbon{height:94px;background:#f3f2f1;border-bottom:2px solid #d4d4d4;display:flex;flex:none}
.rg{position:relative;display:flex;flex-direction:column;border-right:1px solid #c6c6c6;margin:1px 0 0}
.rg-clip{width:151px}
.rg-font{width:314px}
.rg-para{width:400px;border-right:0}
.rg-main{flex:1;display:flex;min-height:0}
.rg-main.col{flex-direction:column}
.rg-label{height:18px;padding-top:3px;text-align:center;font-size:12.500px;line-height:15px;color:#444;position:relative}
.launch{position:absolute;right:5px;top:6px}
.paste{width:46px;margin-left:11px;display:flex;flex-direction:column;align-items:center;padding-top:3px;font-size:13px;color:#333;line-height:16px}
.paste span{margin-top:1px;white-space:nowrap}
.paste .grey{margin-top:6px}
.clip-list{margin-left:8px;margin-top:-2px;display:flex;flex-direction:column;font-size:13px;color:#444}
.clip-list div{height:24px;display:flex;align-items:center;gap:3px}
.clip-list svg{width:15px}
.frow{display:flex;align-items:center;height:22px;margin-top:8px;padding-left:8px;color:#444}
.frow.r2{height:18px;margin-top:12px;padding-left:0}
.prow{padding-left:10px}
.frow.r2.prow{padding-left:10px}
.fbox{height:22px;background:#fff;border:1px solid #c6c6c6;display:flex;align-items:center;justify-content:space-between;padding:0 3px;font-size:12.500px;white-space:nowrap;overflow:hidden;flex:none;color:#333}
.fname{width:90px}
.fsize{width:47px;margin-left:-1px;padding-right:6px}
.gg{font-size:12px;position:relative;display:inline-flex;align-items:center;color:#444;white-space:nowrap;line-height:16px}
.gg sup,.gg sub{font-size:8px;line-height:8px}
.sb{color:#2b9bd8;font-size:10px!important}
.gg.small{font-size:8px;color:#777}
.gruby{font-size:7px;line-height:8px;color:#aaa;text-align:center;width:15px}
.boxed{width:16px;height:16px;border:1px solid #333;justify-content:center}
.gg.b{font-weight:700}
.gg.i{font-style:italic;color:#777}
.gg.u{text-decoration:underline}
.gg.s{text-decoration:line-through}
.gg.sm{font-weight:700;font-size:12px;font-family:"Liberation Sans",sans-serif}
.gg sub{color:#2b9bd8;align-self:flex-end}
.gg.sm sup{color:#2b9bd8;align-self:flex-start}
.texteff{font-size:15px;font-weight:700;color:#1f7fc7}
.red{font-size:13px;font-weight:500;border-bottom:3px solid #f00;width:16px;justify-content:center;height:18px}
.shade{background:#b5b5b5;width:16px;height:16px;justify-content:center}
.circled{width:16px;height:16px;border:1px solid #aaa;border-radius:50%;justify-content:center;color:#999;font-size:10px}
.vsep{width:1px;height:18px;background:#c6c6c6;flex:none}
.a-on{margin-left:3px;width:22px;height:23px;background:#c6c6c6;display:flex;align-items:center;justify-content:center}
.lab-para{width:254px;text-align:center}
.w-doc-area{flex:1;display:flex;background:#fff}
.w-gutter{width:74px;background:#e9e9e9}
.w-sheet{flex:1;position:relative}
.handle-l,.handle-r{position:absolute;top:109px;bottom:0;width:1px;background:#a8a8a8}
.handle-l{left:152px}
.handle-r{left:389px;top:122px}
.rot{position:absolute;left:378px;top:102px}

/* explorer */
.ex-qat{height:30px;display:flex;align-items:center;padding:0 0 1px 10px;flex:none}
.q-sep{width:1px;height:13px;background:#aaa;margin-left:8px}
.ex-title{margin-left:7px;color:#a8a8a8;font-size:12.500px}
.ex-tabs{height:24px;display:flex;align-items:stretch;border-bottom:1px solid #e3e3e3;font-size:12.500px;color:#444;flex:none}
.ex-tabs span{line-height:23px}
.ex-file{width:57px;background:#0063b1;color:#fff;text-align:center}
.ex-t1{margin-left:15px}
.ex-t2{margin-left:29px}
.ex-t3{margin-left:30px}
.ex-nav{height:42px;display:flex;align-items:center;padding-left:13px;flex:none}
.ex-addr{margin-left:8px;flex:1;height:30px;border:1px solid #d9d9d9;border-right:0;display:flex;align-items:center;padding:0 0 2px 5px;font-size:12.500px;color:#222}
.crumb-ch{margin:0 10px}
.ex-body{flex:1;display:flex;min-height:0}
.ex-side{width:160px;border-right:1px solid #f1f1f1;padding-top:17px;flex:none;font-size:12.500px;color:#222}
.sd{height:24px;display:flex;align-items:center;padding:0 0 3px 32px;gap:6px;position:relative;white-space:nowrap;width:156px;overflow:hidden}
.sd-root{padding-left:25px;gap:5px}
.sd-on{background:#d9d9d9;padding-left:27px}
.sd-f{padding-left:34px;gap:6px}
.sd-t{flex:none}
.sd-t.clip{width:104px;overflow:hidden}
.sd-pin{position:absolute;left:142px;top:6px}
.sd-od{margin-top:9px}
.sd-pc{margin-top:8px}
.sd-nw{margin-top:8px}
.ex-list{flex:1;padding-left:14px;min-width:0}
.ex-head{height:25px;margin-top:1px;margin-bottom:6px;display:flex;align-items:center;font-size:12.500px;color:#666}
.hc{position:relative;height:25px;line-height:25px;border-right:1px solid #e5e5e5;padding-left:4px;flex:none}
.hc-n{width:257px}
.hc-d{width:144px;padding-left:7px}
.hc-t{padding-left:7px;white-space:nowrap}
.sort{position:absolute;left:124px;top:-1px}
.fr{height:21px;display:flex;align-items:center;padding:0 0 2px 6px;font-size:12.500px;color:#222;white-space:nowrap}
.fr-on{background:#d9d9d9;height:22px;margin-bottom:-1px}
.fr svg{width:13px}
.fr .pdfic{width:16px;margin-left:-2px;margin-right:-1px}
.fn{margin-left:5px;width:241px;flex:none;overflow:hidden}
.fd{width:144px;flex:none;color:#6d6d6d}
.ft{color:#6d6d6d}
.ex-status{height:24px;display:flex;align-items:center;padding:0 0 2px 14px;font-size:12.500px;color:#47607a;flex:none}
.st-sep{width:1px;height:12px;background:#e5e5e5;margin:0 11px}

/* edge */
.e-tabs{height:33px;background:#d4d4d2;display:flex;align-items:center;position:relative;flex:none}
.e-t1{margin-left:9px}
.e-t2{margin-left:17px}
.e-tab{margin-left:8px;width:202px;height:33px;background:#f2f2f2;display:flex;align-items:center;padding:0 0 2px 9px;gap:11px;font-size:13px;color:#111}
.e-tab-t{width:135px;overflow:hidden;white-space:nowrap;flex:none}
.e-tab-x{color:#333;margin-left:5px}
.e-plus{margin-left:9px}
.e-more{margin-left:19px}
.e-min{margin-left:auto;margin-right:34px}
.e-nav{height:40px;background:#f2f2f2;display:flex;align-items:center;border-bottom:1px solid #dcdcdc;flex:none}
.e-back{margin-left:12px}
.e-fwd{margin-left:24px}
.e-ref{margin-left:24px}
.e-home{margin-left:24px}
.e-addr{margin-left:28px;width:756px;height:32px;background:#fff;border:1px solid #dadada;display:flex;align-items:center;padding-left:9px;flex:none}
.e-addr-sep{width:1px;height:18px;background:#ccc;margin-left:8px}
.e-url{margin-left:6px;width:680px;overflow:hidden;white-space:nowrap;color:#666;font-size:12.450px;flex:none}
.e-star{margin-left:9px}
.e-hub{margin-left:28px}
.e-pen{margin-left:24px;color:#aaa}
.e-pdfbar{height:40px;background:#f0f0f0;display:flex;align-items:center;border-bottom:1px solid #d9d9d9;font-size:13px;color:#333;flex:none}
.e-page{width:39px;height:39px;background:#fff;text-align:center;line-height:39px;color:#222;flex:none}
.e-total{margin-left:11px;width:26px;color:#555}
.e-sep{width:1px;height:24px;background:#999;margin-left:11px;flex:none}
.e-find{margin-left:15px}
.e-minus{margin-left:189px}
.e-zoomin{margin-left:25px}
.e-rot{margin-left:25px}
.e-full{margin-left:25px}
.e-act{display:flex;align-items:center;gap:8px;white-space:nowrap;flex:none}
.e-a1{margin-left:23px}
.e-a2{margin-left:24px;gap:6px}
.e-sep2{margin-left:17px}
.e-a3{margin-left:16px;gap:6px}
.e-reada{font-size:16px;line-height:16px;display:flex}
.e-reada sup{font-size:9px;line-height:9px}
.e-a4{margin-left:30px;gap:6px}
.e-print{margin-left:24px}
.e-psave{margin-left:25px;color:#aaa}
.pdf-view{flex:1;min-height:0;background:#e6e6e6;padding-left:98px;overflow:hidden}
.pdf-page{width:911px;height:100%;background:#fff;padding:11px 0 0 67px;display:flex;overflow:hidden}

/* pdf text */
.pdf-col{flex:none;font-size:14px;line-height:19.600px;color:#1a1a1a;filter:blur(.35px);font-family:"Noto Sans CJK KR",sans-serif}
.pdf-left{width:380px;padding-right:14px;border-right:1px dotted #cfeaf7}
.pdf-right{width:372px;margin-left:16px}
.p{display:flex;margin-top:14.700px}
.p:first-child{margin-top:0}
.p-first{margin-left:6px}
.p-first .n{width:18px}
.p-tight{margin-top:9.600px}
.n{width:21px;flex:none;color:#159fdc;font:700 15.500px/19.600px "Liberation Sans",sans-serif;letter-spacing:-.6px}
.pdf-right .n{width:27px;letter-spacing:-1px}
.n2{margin-left:-7px;width:28px;letter-spacing:-1px}
.t{flex:1;min-width:0}
.l{white-space:nowrap;text-align:justify;text-align-last:justify}
.l.e{text-align:left;text-align-last:left}
.sub{display:flex;margin-top:5.200px}
.m{width:18px;flex:none}
.bul{display:flex;margin-top:4.800px;font-size:12.500px;letter-spacing:-.35px;font-weight:500}
.bul b{font-weight:500}
.dot{width:17px;padding-left:4px;flex:none;font-size:13px}
.kbd{display:inline-block;width:22px;height:16px;border:1px solid #444;border-radius:3px;margin:0 2px 0 8px;font:700 10px/14px "Liberation Sans",sans-serif;text-align:center;vertical-align:-2px}
.kbd-s{font-size:5px;line-height:6.500px;margin-left:2px;padding-top:1px}

/* watermark */
.wm-box{position:absolute;left:1291px;top:1046px;width:273px;height:80px;background:#fafafa}
.wm{position:absolute;left:1506px;top:1058px;color:#c4c4c4}
.wm-1{font-size:19.300px;line-height:26px;white-space:nowrap}
.wm-2{font-size:16px;line-height:20px;white-space:nowrap}
```
